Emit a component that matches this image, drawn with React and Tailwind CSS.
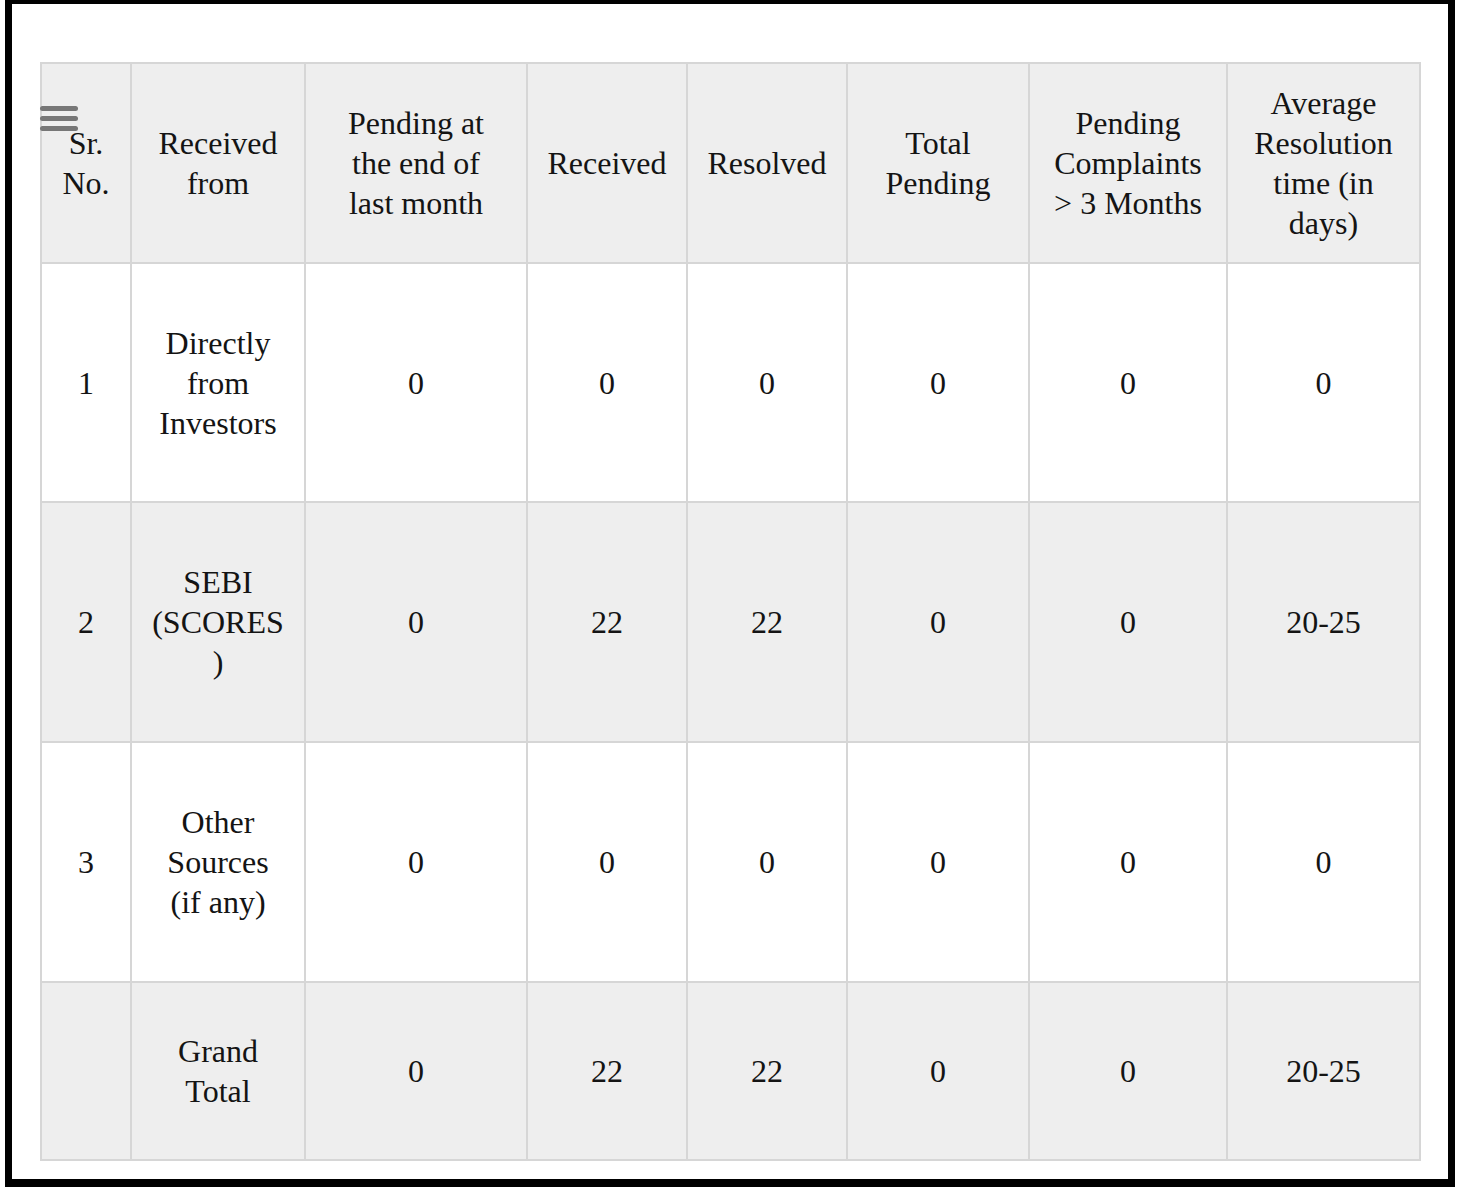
import React from 'react';

const headers = [
    'Sr. No.',
    'Received from',
    'Pending at the end of last month',
    'Received',
    'Resolved',
    'Total Pending',
    'Pending Complaints > 3 Months',
    'Average Resolution time (in days)',
];

const rows = [
    { h: 'h-[239px]', bg: 'bg-white', cells: ['1', 'Directly from Investors', '0', '0', '0', '0', '0', '0'] },
    { h: 'h-[240px]', bg: 'bg-[#eeeeee]', cells: ['2', 'SEBI (SCORES )', '0', '22', '22', '0', '0', '20-25'] },
    { h: 'h-[240px]', bg: 'bg-white', cells: ['3', 'Other Sources (if any)', '0', '0', '0', '0', '0', '0'] },
    { h: 'h-[178px]', bg: 'bg-[#eeeeee]', cells: ['', 'Grand Total', '0', '22', '22', '0', '0', '20-25'] },
];

const widths = ['w-[90px]', 'w-[174px]', 'w-[222px]', 'w-[160px]', 'w-[160px]', 'w-[182px]', 'w-[198px]', 'w-[193px]'];
const pads = ['px-2', 'px-5', 'px-[22px]', 'px-3', 'px-3', 'px-5', 'px-5', 'px-5'];

const Menu = () => (
    <div className="absolute left-0 top-[44px] flex flex-col gap-[5px]">
        <div className="h-[5px] w-[38px] rounded-full bg-[#777777]"></div>
        <div className="h-[5px] w-[38px] rounded-full bg-[#777777]"></div>
        <div className="h-[5px] w-[38px] rounded-full bg-[#777777]"></div>
    </div>
);

export default function App() {
    return (
        <div className="w-[1464px] h-[1190px] bg-white overflow-hidden">
            <div className="ml-[5px] w-[1450px] h-[1187px] border-x-[7px] border-t-[4px] border-b-[8px] border-black bg-white pt-[58px] px-[28px]">
                <div className="relative">
                    <table
                        className="table-fixed border-collapse w-[1379px] text-[32px] leading-[40px] text-[#141414] text-center"
                        style={{ fontFamily: '"Liberation Serif", "Times New Roman", serif' }}
                    >
                        <colgroup>
                            {widths.map((w, i) => (
                                <col key={i} className={w} />
                            ))}
                        </colgroup>
                        <thead>
                            <tr className="h-[200px] bg-[#eeeeee]">
                                {headers.map((t, i) => (
                                    <th key={i} className={`font-normal border-2 border-[#d6d6d6] align-middle ${pads[i]}`}>
                                        {t}
                                    </th>
                                ))}
                            </tr>
                        </thead>
                        <tbody>
                            {rows.map((r, ri) => (
                                <tr key={ri} className={`${r.h} ${r.bg}`}>
                                    {r.cells.map((c, ci) => (
                                        <td key={ci} className={`border-2 border-[#d6d6d6] align-middle ${pads[ci]}`}>
                                            {c}
                                        </td>
                                    ))}
                                </tr>
                            ))}
                        </tbody>
                    </table>
                    <Menu />
                </div>
            </div>
        </div>
    );
}
